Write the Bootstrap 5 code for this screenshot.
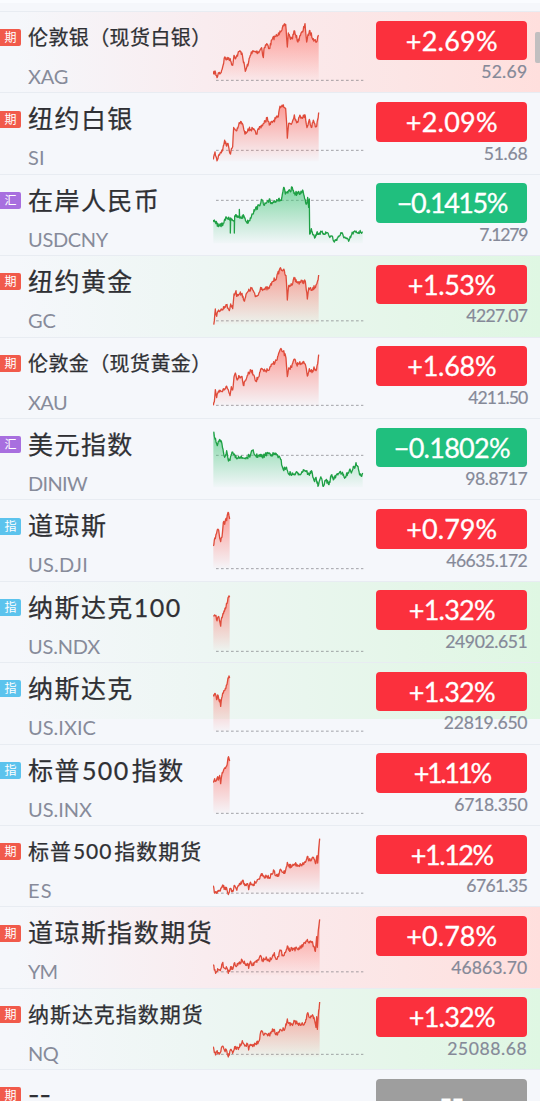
<!DOCTYPE html>
<html lang="zh-CN">
<head>
<meta charset="utf-8">
<meta name="viewport" content="width=device-width, initial-scale=1">
<title>自选行情</title>
<link href="https://cdn.jsdelivr.net/npm/bootstrap@5.3.0/dist/css/bootstrap.min.css" rel="stylesheet">
<style>
html, body { height: 1101px; overflow: hidden; }
body { background: #f5f7fb; color: #2f3034; font-family: Lato, "Noto Sans CJK SC", sans-serif; }
.quotes { height: 1101px; padding-top: 11px; background: linear-gradient(#fafcff 0 3px, transparent 3px); }
.quote { height: 81.4px; flex: none; border-top: 1px solid #e8ecf2; }
.quote.up { background: linear-gradient(90deg, #f5f7fb 3%, #f9ecef 38%, #fce5e5 75%, #ffdfdd); }
.quote.down { background: linear-gradient(90deg, #f5f7fb 3%, #edf6f3 38%, #e5f6e9 75%, #dff7e3); }
.quote.half { background-size: 100% 56px; background-repeat: no-repeat; }
.tag { width: 21px; height: 17px; margin-top: 17.3px; border-radius: 0 2px 2px 0; font-size: 12px; line-height: 17px; color: #fff; flex: none; }
.tag-qi { background: #f15a4b; }
.tag-hui { background: #a86fdf; }
.tag-zhi { background: #5cc3ed; }
.label-col { width: 185px; margin-left: 7px; flex: none; }
.title { height: 38px; margin-top: 6px; line-height: 38px; font-size: 25px; letter-spacing: 1.45px; font-weight: 400; -webkit-text-stroke: .25px; }
.title.mid { font-size: 21px; letter-spacing: .95px; }
.title.tight { font-size: 20px; letter-spacing: .4px; }
.title.blank { font-family: Inter, sans-serif; letter-spacing: 0; }
.title .figure { margin: 0 2px 0 1px; }
.code { height: 26px; margin-top: 7px; line-height: 26px; font-size: 20px; color: #878b9a; }
.spark { width: 151px; height: 81px; flex: none; }
.value-col { width: 151px; margin: 8.7px 0 0 12.3px; flex: none; }
.change { height: 39.6px; border-radius: 4px; font-size: 27px; line-height: 39px; color: #fff; background: #fb303d; -webkit-text-stroke: .3px; }
.change.falling { background: #20bf7e; }
.change.idle { background: #9e9e9e; font-family: Inter, sans-serif; }
.price { height: 24px; line-height: 24.6px; font-size: 17.6px; color: #858998; -webkit-text-stroke: .2px; }
.thumb { width: 6px; height: 31px; top: 32px; right: -1px; border-radius: 2px; background: #c1bfc0; }
</style>
</head>
<body>
<main class="quotes d-flex flex-column position-relative overflow-hidden" id="quotes"></main>
<div class="thumb position-absolute"></div>
<script src="https://cdn.jsdelivr.net/npm/bootstrap@5.3.0/dist/js/bootstrap.bundle.min.js"></script>
<script>
const futures = "40,420 43,440 47,438 50,443 55,434 61,436 68,418 74,430 79,425 85,447 92,428 98,438 104,420 109,430 117,420 127,405 136,416 143,414 146,432 150,412 158,418 166,410 176,400 184,384 190,392 200,392 208,396 216,386 222,376 227,390 236,391 240,372 248,380 256,378 262,350 266,360 276,362 284,355 293,358 302,358 316,350 322,332 328,343 336,338 342,340 348,352 351,330 353,352 356,310 359,279";
// tag, name, size, code, change, change width, price, price width, code width, tint, baseline, top of row, points
const rows = [
 ["期","伦敦银（现货白银）","tight","XAG","+2.69%",91,"52.69",45,39,"up",240,35,"40,222 45,212 48,225 51,232 55,218 62,218 68,200 74,170 80,178 86,172 92,182 98,195 102,165 108,172 118,153 126,158 136,213 146,185 154,155 175,155 185,142 190,172 192,145 200,130 208,145 216,118 226,108 234,105 240,92 257,72 262,140 265,98 270,112 276,115 284,92 294,125 300,105 308,95 315,70 320,125 328,92 340,115 350,125 353,110 356,105"],
 ["期","纽约白银","","SI","+2.09%",91,"51.68",42.5,16,"",450.5,278.5,"40,478 45,455 51,482 57,463 64,458 74,420 80,438 84,430 90,460 98,440 101,382 109,392 116,375 124,365 130,380 135,402 144,386 160,388 168,402 180,380 192,370 202,352 208,375 222,360 235,350 240,318 250,314 257,325 260,370 262,414 266,370 275,370 283,344 290,368 298,350 316,348 321,382 328,358 334,382 340,360 346,380 350,378 353,358 356,337"],
 ["汇","在岸人民币","","USDCNY","−0.1415%",109,"7.1279",47,79,"",89,13,"40,148 46,152 56,168 70,158 80,140 91,147 91,187 92,142 103,150 103,187 104,136 110,138 118,140 118,116 119,142 132,136 140,155 148,150 156,130 166,115 178,105 184,86 192,104 200,96 206,95 208,85 212,98 230,87 244,89 251,50 256,70 270,62 277,50 282,68 300,68 308,58 314,85 320,100 323,80 326,110 328,85 329,190 334,174 344,202 350,187 384,187 388,198 396,196 403,214 412,202 424,188 436,202 446,212 458,186 488,183"],
 ["期","纽约黄金","","GC","+1.53%",87,"4227.07",60,27,"down",450.5,256,"40,460 43,450 46,415 50,437 56,418 66,418 78,402 84,412 88,420 92,400 98,414 102,370 108,360 110,377 118,370 126,368 132,390 142,365 156,352 166,378 175,373 182,350 192,356 208,352 218,332 230,320 240,293 250,298 258,315 262,388 266,345 275,343 282,320 290,335 316,332 322,385 326,352 336,359 348,343 353,330 356,313"],
 ["期","伦敦金（现货黄金）","tight","XAU","+1.68%",88,"4211.50",58,38,"",210,8,"40,210 43,199 46,163 50,187 56,170 66,169 78,154 84,162 90,181 94,154 98,164 102,125 106,113 110,130 118,122 126,123 130,150 142,120 154,105 162,120 168,136 176,125 184,100 192,108 208,103 218,85 230,75 240,44 250,48 258,68 262,124 266,98 275,96 282,72 290,87 298,84 308,80 316,87 322,122 328,100 336,112 342,95 348,106 353,85 356,58"],
 ["汇","美元指数","","DINIW","−0.1802%",115,"98.8717",61,58,"",359,250,"40,289 45,310 52,330 58,313 66,325 74,365 80,345 84,370 90,374 98,349 106,366 116,362 126,368 142,366 152,356 158,345 166,360 190,362 204,352 216,356 230,356 242,372 250,402 258,395 264,411 280,417 292,412 304,413 310,402 318,405 328,419 334,405 344,438 348,425 354,452 358,436 364,427 370,452 378,432 387,447 394,418 402,430 412,414 420,408 426,413 434,428 444,410 450,400 454,412 460,392 464,398 468,381 474,392 480,418 485,422 488,412"],
 ["指","道琼斯","","US.DJI","+0.79%",90,"46635.172",80,59,"",207,1,"40,139 43,121 46,117 48,104 52,90 56,91 59,115 62,126 66,112 70,68 74,74 77,58 80,63 84,38 87,48 89,58"],
 ["指","纳斯达克100","","US.NDX","+1.32%",85,"24902.651",81,71,"down",451.5,243.5,"40,346 44,342 48,344 51,360 55,347 60,365 62,376 65,350 69,338 75,322 81,308 84,291 87,285 89,289"],
 ["指","纳斯达克","","US.IXIC","+1.32%",85,"22819.650",82.5,67,"down half",694.5,490,"40,584 44,582 48,588 50,600 53,586 57,602 60,600 62,620 65,595 70,580 76,566 81,554 84,535 87,529 89,535"],
 ["指","标普<span class='figure'>500</span>指数","","US.INX","+1.11%",75,"6718.350",72,63,"",204,-1,"40,112 44,100 48,107 53,94 55,104 59,90 62,115 65,92 70,77 75,67 80,62 84,38 87,39 89,47"],
 ["期","标普<span class='figure'>500</span>指数期货","mid","ES","+1.12%",81,"6761.35",60,24,"",442.5,241,futures],
 ["期","道琼斯指数期货","","YM","+0.78%",90,"46863.70",75,28,"up",215.5,21,"40,194 43,210 47,220 50,215 55,210 61,212 67,190 74,205 79,200 85,220 92,200 98,208 104,188 109,200 117,190 127,181 136,194 143,190 146,205 150,188 158,195 166,186 176,180 180,168 188,180 200,175 206,182 216,173 223,158 227,175 236,170 240,150 248,165 256,158 262,138 266,150 276,145 293,148 302,142 316,130 322,118 326,128 336,125 340,140 346,154 350,110 352,142 355,90 359,58"],
 ["期","纳斯达克指数期货","mid","NQ","+1.32%",85,"25088.68",79,29,"down",461,265,"40,438 43,455 47,463 50,453 55,456 61,455 67,437 74,450 79,447 85,469 92,446 98,458 104,438 109,446 117,440 127,420 136,435 143,430 146,448 150,432 158,438 166,430 176,422 184,390 190,402 200,400 208,405 216,392 222,386 227,402 236,395 240,386 248,388 256,380 262,355 266,368 276,370 284,362 293,370 302,374 316,366 322,338 328,350 336,345 342,350 345,365 348,380 350,348 352,386 356,330 359,304"],
 ["期","--","blank","","--",23,"",0,0,"",0,0,""]
];
const tagClass = {"期":"tag-qi","汇":"tag-hui","指":"tag-zhi"};
let seed = 7;
const rand = () => (seed = (seed * 16807) % 2147483647) / 2147483647 - .5;

function ticks(text, top) {
  const p = text.split(" ").map(s => s.split(",").map(Number));
  const out = [];
  p.forEach(([x, y], i) => {
    out.push([x, y - top]);
    const n = p[i + 1];
    if (!n) return;
    for (let t = x + 1.5; t < n[0] - 1; t += 1.5)
      out.push([t, y + (n[1] - y) * (t - x) / (n[0] - x) - top + rand() * 12]);
  });
  return out;
}
function spark(r, i) {
  if (!r[12]) return '<div class="spark"></div>';
  const green = r[0] === "汇", c = green ? "#1fa045" : "#df4b3a", f = green ? "#3fc474" : "#ff6a60";
  const pts = ticks(r[12], r[11]), line = pts.map(p => p.map(v => v.toFixed(1)).join(",")).join(" ");
  const end = pts[pts.length - 1][0], base = r[10] - r[11], min = Math.min(...pts.map(p => p[1]));
  return `<svg class="spark" viewBox="39 0 453 243" aria-hidden="true"><defs><linearGradient id="g${i}" gradientUnits="userSpaceOnUse" x1="0" x2="0" y1="${min}" y2="205"><stop stop-color="${f}" stop-opacity=".65"/><stop offset="1" stop-color="${f}" stop-opacity=".02"/></linearGradient></defs>
  <line x1="48" x2="490" y1="${base}" y2="${base}" stroke="#77777d" stroke-opacity=".65" stroke-width="3" stroke-dasharray="8 7"/>
  <polygon points="40,205 ${line} ${end},205" fill="url(#g${i})"/><polyline points="${line}" fill="none" stroke="${c}" stroke-width="3.9" stroke-linejoin="round"/></svg>`;
}
document.getElementById("quotes").innerHTML = rows.map((r, i) => `
<section class="quote d-flex align-items-start ${r[9]}">
  <span class="tag text-center ${tagClass[r[0]]}">${r[0]}</span>
  <div class="label-col"><h2 class="title mb-0 text-nowrap ${r[2]}">${r[1]}</h2><div class="code"><span data-w="${r[8]}">${r[3]}</span></div></div>
  ${spark(r, i)}
  <div class="value-col"><div class="change text-center ${r[0] === "汇" ? "falling" : i === 13 ? "idle" : ""}"><span data-w="${r[5]}">${r[4]}</span></div>
  <div class="price text-end"><span data-w="${r[7]}">${r[6]}</span></div></div>
</section>`).join("");
// Evens out the tracking so each figure fills its measure
document.querySelectorAll("[data-w]").forEach(el => {
  const n = el.textContent.length;
  if (!n) return;
  const s = (Number(el.dataset.w) + 1 - el.getBoundingClientRect().width) / n;
  el.style.letterSpacing = s.toFixed(2) + "px";
});
</script>
</body>
</html>
